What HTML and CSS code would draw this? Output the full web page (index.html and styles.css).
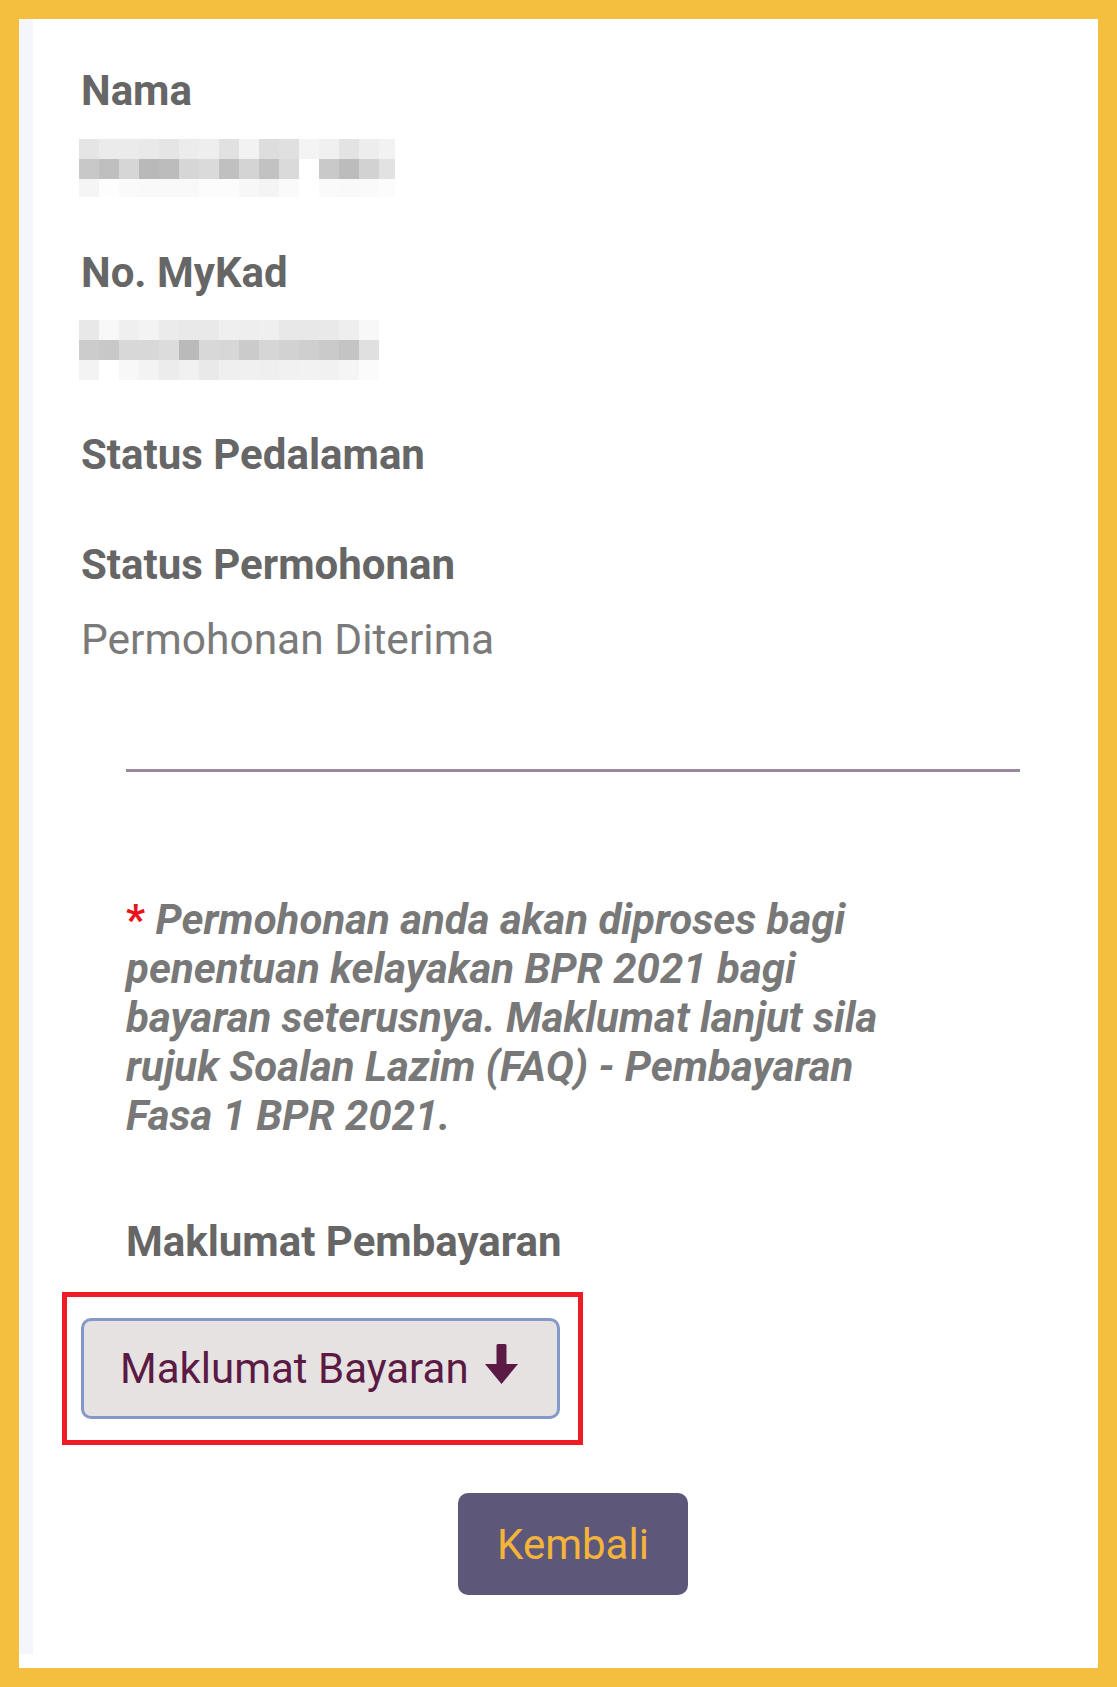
FILE: index.html
```html
<!DOCTYPE html>
<html lang="ms">
<head>
  <meta charset="UTF-8" />
  <meta name="viewport" content="width=device-width, initial-scale=1.0" />
  <title>Semakan Status BPR</title>
  <link rel="stylesheet" href="styles.css">
</head>
<body>
  <div class="frame">
    <div class="sheet">
      <div class="content">

        <div class="field">
          <div class="field-label">Nama</div>
          <div class="field-value">
            <!-- blurred value -->
            <svg class="mosaic" width="316" height="60" viewBox="0 0 316 60" shape-rendering="crispEdges">
              <g>
                <rect x="0" y="1" width="20" height="20" fill="#e5e5e5"/><rect x="20" y="1" width="20" height="20" fill="#ebebeb"/><rect x="40" y="1" width="20" height="20" fill="#ebebeb"/><rect x="60" y="1" width="20" height="20" fill="#e9e9e9"/><rect x="80" y="1" width="20" height="20" fill="#e5e5e5"/><rect x="100" y="1" width="20" height="20" fill="#ececec"/><rect x="120" y="1" width="20" height="20" fill="#eeeeee"/><rect x="140" y="1" width="20" height="20" fill="#e1e1e1"/><rect x="160" y="1" width="20" height="20" fill="#f2f2f2"/><rect x="180" y="1" width="20" height="20" fill="#dddddd"/><rect x="200" y="1" width="20" height="20" fill="#e0e0e0"/><rect x="220" y="1" width="20" height="20" fill="#f4f4f4"/><rect x="240" y="1" width="20" height="20" fill="#f0f0f0"/><rect x="260" y="1" width="20" height="20" fill="#e3e3e3"/><rect x="280" y="1" width="20" height="20" fill="#ededed"/><rect x="300" y="1" width="16" height="20" fill="#f2f2f2"/>
              </g>
              <g>
                <rect x="0" y="21" width="20" height="20" fill="#c8c8c8"/><rect x="20" y="21" width="20" height="20" fill="#bfbfbf"/><rect x="40" y="21" width="20" height="20" fill="#d6d6d6"/><rect x="60" y="21" width="20" height="20" fill="#b9b9b9"/><rect x="80" y="21" width="20" height="20" fill="#bcbcbc"/><rect x="100" y="21" width="20" height="20" fill="#d6d6d6"/><rect x="120" y="21" width="20" height="20" fill="#dadada"/><rect x="140" y="21" width="20" height="20" fill="#c0c0c0"/><rect x="160" y="21" width="20" height="20" fill="#d4d4d4"/><rect x="180" y="21" width="20" height="20" fill="#c2c2c2"/><rect x="200" y="21" width="20" height="20" fill="#dadada"/><rect x="220" y="21" width="20" height="20" fill="#ffffff"/><rect x="240" y="21" width="20" height="20" fill="#c9c9c9"/><rect x="260" y="21" width="20" height="20" fill="#bcbcbc"/><rect x="280" y="21" width="20" height="20" fill="#d2d2d2"/><rect x="300" y="21" width="16" height="20" fill="#e2e2e2"/>
              </g>
              <g>
                <rect x="0" y="41" width="20" height="18" fill="#f5f5f5"/><rect x="20" y="41" width="20" height="18" fill="#fdfdfd"/><rect x="40" y="41" width="20" height="18" fill="#fafafa"/><rect x="60" y="41" width="20" height="18" fill="#f9f9f9"/><rect x="80" y="41" width="20" height="18" fill="#f9f9f9"/><rect x="100" y="41" width="20" height="18" fill="#f9f9f9"/><rect x="120" y="41" width="20" height="18" fill="#fcfcfc"/><rect x="140" y="41" width="20" height="18" fill="#fcfcfc"/><rect x="160" y="41" width="20" height="18" fill="#f7f7f7"/><rect x="180" y="41" width="20" height="18" fill="#f4f4f4"/><rect x="200" y="41" width="20" height="18" fill="#fafafa"/><rect x="240" y="41" width="20" height="18" fill="#fafafa"/><rect x="260" y="41" width="20" height="18" fill="#f9f9f9"/><rect x="280" y="41" width="20" height="18" fill="#fafafa"/><rect x="300" y="41" width="16" height="18" fill="#fcfcfc"/>
              </g>
            </svg>
          </div>
        </div>

        <div class="field">
          <div class="field-label">No. MyKad</div>
          <div class="field-value">
            <svg class="mosaic" width="300" height="60" viewBox="0 0 300 60" shape-rendering="crispEdges">
              <g>
                <rect x="0" y="0" width="20" height="20" fill="#e8e8e8"/><rect x="20" y="0" width="20" height="20" fill="#f8f8f8"/><rect x="40" y="0" width="20" height="20" fill="#efefef"/><rect x="60" y="0" width="20" height="20" fill="#f3f3f3"/><rect x="80" y="0" width="20" height="20" fill="#ebebeb"/><rect x="100" y="0" width="20" height="20" fill="#e9e9e9"/><rect x="120" y="0" width="20" height="20" fill="#e9e9e9"/><rect x="140" y="0" width="20" height="20" fill="#efefef"/><rect x="160" y="0" width="20" height="20" fill="#eeeeee"/><rect x="180" y="0" width="20" height="20" fill="#efefef"/><rect x="200" y="0" width="20" height="20" fill="#e8e8e8"/><rect x="220" y="0" width="20" height="20" fill="#e8e8e8"/><rect x="240" y="0" width="20" height="20" fill="#e9e9e9"/><rect x="260" y="0" width="20" height="20" fill="#eeeeee"/><rect x="280" y="0" width="20" height="20" fill="#f8f8f8"/>
              </g>
              <g>
                <rect x="0" y="20" width="20" height="20" fill="#cccccc"/><rect x="20" y="20" width="20" height="20" fill="#c8c8c8"/><rect x="40" y="20" width="20" height="20" fill="#d8d8d8"/><rect x="60" y="20" width="20" height="20" fill="#d8d8d8"/><rect x="80" y="20" width="20" height="20" fill="#dcdcdc"/><rect x="100" y="20" width="20" height="20" fill="#bababa"/><rect x="120" y="20" width="20" height="20" fill="#d8d8d8"/><rect x="140" y="20" width="20" height="20" fill="#d7d7d7"/><rect x="160" y="20" width="20" height="20" fill="#cbcbcb"/><rect x="180" y="20" width="20" height="20" fill="#d6d6d6"/><rect x="200" y="20" width="20" height="20" fill="#d2d2d2"/><rect x="220" y="20" width="20" height="20" fill="#cfcfcf"/><rect x="240" y="20" width="20" height="20" fill="#cacaca"/><rect x="260" y="20" width="20" height="20" fill="#c4c4c4"/><rect x="280" y="20" width="20" height="20" fill="#e0e0e0"/>
              </g>
              <g>
                <rect x="0" y="40" width="20" height="20" fill="#f3f3f3"/><rect x="40" y="40" width="20" height="20" fill="#f8f8f8"/><rect x="60" y="40" width="20" height="20" fill="#f3f3f3"/><rect x="80" y="40" width="20" height="20" fill="#ececec"/><rect x="100" y="40" width="20" height="20" fill="#f1f1f1"/><rect x="120" y="40" width="20" height="20" fill="#e9e9e9"/><rect x="140" y="40" width="20" height="20" fill="#efefef"/><rect x="160" y="40" width="20" height="20" fill="#f0f0f0"/><rect x="180" y="40" width="20" height="20" fill="#efefef"/><rect x="200" y="40" width="20" height="20" fill="#f1f1f1"/><rect x="220" y="40" width="20" height="20" fill="#f2f2f2"/><rect x="240" y="40" width="20" height="20" fill="#f1f1f1"/><rect x="260" y="40" width="20" height="20" fill="#f5f5f5"/><rect x="280" y="40" width="20" height="20" fill="#fbfbfb"/>
              </g>
            </svg>
          </div>
        </div>

        <div class="field field-empty">
          <div class="field-label">Status Pedalaman</div>
        </div>

        <div class="field">
          <div class="field-label">Status Permohonan</div>
          <div class="field-value text-value">Permohonan Diterima</div>
        </div>

        <hr class="divider">

        <p class="note"><span class="required">*</span> Permohonan anda akan diproses bagi penentuan kelayakan BPR 2021 bagi bayaran seterusnya. Maklumat lanjut sila rujuk Soalan Lazim (FAQ) - Pembayaran Fasa 1 BPR 2021.</p>

        <h5 class="section-title">Maklumat Pembayaran</h5>

        <div class="highlight">
          <button class="btn-download" type="button">
            Maklumat Bayaran
            <svg class="icon-down" width="33" height="40" viewBox="0 0 33 40">
              <rect x="11.5" y="0" width="10" height="22" rx="1.5" fill="#5a1a44"/>
              <polygon points="0,20 33,20 16.5,40" fill="#5a1a44"/>
            </svg>
          </button>
        </div>

        <div class="actions">
          <button class="btn-back" type="button">Kembali</button>
        </div>

      </div>
    </div>
  </div>
</body>
</html>
```

FILE: styles.css
```css
* {
  margin: 0;
  padding: 0;
  box-sizing: border-box;
  font-family: Roboto, 'Liberation Sans', sans-serif;
}

body {
  background: #ffffff;
}

.frame {
  min-height: 100vh;
  border: 19px solid #f4be3e;
  padding-bottom: 14px;
  display: flex;
  flex-direction: column;
  background: #ffffff;
}

.sheet {
  flex: 1;
  border-left: 14px solid #f4f6fb;
}

.content {
  padding: 47px 31px 0 46px;
}

.field {
  margin-bottom: 50px;
}

.field-empty {
  margin-bottom: 60px;
}

.field-label {
  padding-left: 2px;
  font-size: 42px;
  line-height: 50px;
  font-weight: 700;
  color: #666666;
}

.field-value {
  margin-top: 22px;
}

.mosaic {
  display: block;
}

.text-value {
  padding-left: 2px;
  font-size: 42.5px;
  line-height: 56px;
  color: #7a7a7a;
}

.divider {
  border: 0;
  height: 3px;
  background: #9a87a0;
  margin: 101px 47px 0;
}

.note {
  margin: 123px 0 0 47px;
  max-width: 790px;
  font-size: 42px;
  line-height: 49px;
  font-style: italic;
  font-weight: 700;
  color: #787878;
}

.required {
  color: #e8141c;
  font-style: normal;
}

.section-title {
  margin: 77px 0 0 47px;
  font-size: 42px;
  line-height: 50px;
  font-weight: 700;
  color: #666666;
}

.highlight {
  width: 521px;
  margin: 25px 0 0 -17px;
  border: 5px solid #ee1c25;
  padding: 21px 18px 21px 14px;
}

.btn-download {
  display: flex;
  align-items: center;
  gap: 16px;
  width: 479px;
  height: 101px;
  padding: 0 36px;
  background: #e6e2e2;
  border: 3px solid #8499c8;
  border-radius: 10px;
  color: #5a1a44;
  font-size: 42px;
  cursor: pointer;
}

.icon-down {
  flex-shrink: 0;
  margin-top: -10px;
}

.actions {
  margin-top: 48px;
  display: flex;
  justify-content: center;
}

.btn-back {
  width: 230px;
  height: 102px;
  background: #5d587a;
  border: none;
  border-radius: 10px;
  color: #f4b43a;
  font-size: 42px;
  cursor: pointer;
}
```
